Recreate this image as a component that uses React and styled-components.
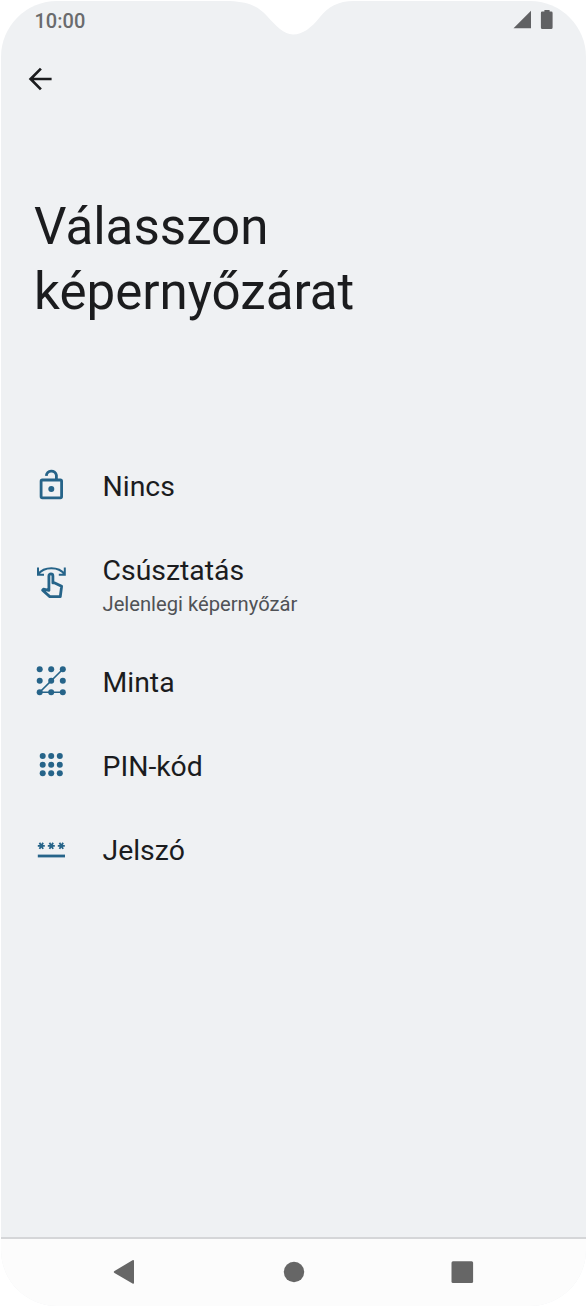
import styled, { createGlobalStyle } from "styled-components";

const options = [
  { id: "none", title: "Nincs", Icon: LockIcon },
  { id: "swipe", title: "Csúsztatás", note: "Jelenlegi képernyőzár", Icon: SwipeIcon },
  { id: "pattern", title: "Minta", Icon: PatternIcon },
  { id: "pin", title: "PIN-kód", Icon: PinIcon },
  { id: "password", title: "Jelszó", Icon: PasswordIcon },
];

const App = () => {
  return (
    <>
      <GlobalStyle />
      <Phone>
        <StatusBar>
          <Time>10:00</Time>
          <Notch viewBox="0 0 110 36">
            <path d="M0 0V1C17 2 27 5 37 16C46 26 54 34.5 63 34.5C73 34.5 81 28 90 17C98 7 108 1 124 1V0Z" />
          </Notch>
          <StatusIcons viewBox="0 0 42 22">
            <path d="M0.5 18.3L18 0.8V18.3Z" />
            <path d="M31.4 0H36.6V1.6H38.3Q39.6 1.6 39.6 2.9V17.4Q39.6 18.9 38.1 18.9H29.3Q27.9 18.9 27.9 17.4V2.9Q27.9 1.6 29.2 1.6H31.4Z" />
          </StatusIcons>
        </StatusBar>
        <Toolbar>
          <BackButton aria-label="Vissza">
            <svg width="24" height="24" viewBox="0 0 24 24">
              <path d="M23.6 12H2.8M12.9 1.6L2.6 12L12.9 22.4" />
            </svg>
          </BackButton>
        </Toolbar>
        <Title>Válasszon képernyőzárat</Title>
        <List>
          {options.map(({ id, title, note, Icon }) => (
            <Row key={id} $tall={Boolean(note)}>
              <Icon />
              <Label>
                <Name>{title}</Name>
                {note && <Note>{note}</Note>}
              </Label>
            </Row>
          ))}
        </List>
        <NavBar>
          <NavButton>
            <svg width="24" height="26" viewBox="0 0 24 26">
              <path d="M2.5 12.1L20.5 1.3Q22 .6 22 2.2V23.8Q22 25.4 20.5 24.6L2.5 13.9Q1 13 2.5 12.1Z" />
            </svg>
          </NavButton>
          <NavButton>
            <svg width="24" height="26" viewBox="0 0 24 26">
              <circle cx="13" cy="13" r="10.2" />
            </svg>
          </NavButton>
          <NavButton>
            <svg width="24" height="26" viewBox="0 0 24 26">
              <rect x="1.5" y="2.3" width="21.6" height="21.6" rx="1.5" />
            </svg>
          </NavButton>
        </NavBar>
      </Phone>
    </>
  );
};

function LockIcon() {
  return (
    <RowIcon viewBox="0 0 34 34">
      <rect x="7.1" y="12" width="20.5" height="17.8" rx="1.2" />
      <path d="M12.3 7.8A5.1 5.1 0 0 1 22.4 7.2V12" />
      <circle className="dot" cx="17.3" cy="21" r="3" />
    </RowIcon>
  );
}

function SwipeIcon() {
  return (
    <RowIcon viewBox="0 0 34 34" $stroke={2}>
      <path d="M4 1.4V8.8H10M30.8 1.4V8.8H24.8M4.2 8.2C10 .2 24.8 .2 30.6 8.2" />
      <path
        strokeWidth="2.8"
        strokeLinejoin="round"
        d="M14.9 24.4V9.9A2 2 0 0 1 18.9 9.9V16.9H20.8L27.6 20.3L26.3 30.6H15.8L8.6 24.2L9.5 23.2Z"
      />
    </RowIcon>
  );
}

function PatternIcon() {
  return (
    <RowIcon viewBox="0 0 34 34" $stroke={1.6}>
      <path d="M28.8 5.3L5.7 28.3H28.8" />
      <Dots xs={[5.7, 17.2, 28.8]} ys={[5.3, 16.8, 28.2]} />
    </RowIcon>
  );
}

function PinIcon() {
  return (
    <RowIcon viewBox="0 0 34 34">
      <Dots xs={[8.7, 17.2, 25.8]} ys={[8.1, 16.7, 25.3]} />
    </RowIcon>
  );
}

function PasswordIcon() {
  return (
    <RowIcon viewBox="0 0 34 34" $stroke={1.8}>
      {[7.3, 17.3, 27.3].map((x) => (
        <path
          key={x}
          d="M-3.5 0H3.5M-1.8 -3.1L1.8 3.1M1.8 -3.1L-1.8 3.1"
          transform={`translate(${x} 13.8)`}
        />
      ))}
      <path strokeWidth="2.8" d="M3.8 24H31" />
    </RowIcon>
  );
}

const Dots = ({ xs, ys }) =>
  ys.map((y) =>
    xs.map((x) => <circle className="dot" key={`${x}-${y}`} cx={x} cy={y} r="3" />)
  );

const GlobalStyle = createGlobalStyle`
  * {
    box-sizing: border-box;
  }
  body {
    margin: 0;
    background: #fff;
    font-family: Roboto, sans-serif;
  }
`;

const Phone = styled.main`
  display: flex;
  flex-direction: column;
  width: 585px;
  height: 1305px;
  margin: 1px 1px 0;
  border-radius: 56px;
  overflow: hidden;
  background: #eff1f3;
  color: #1b1c1e;
`;

const StatusBar = styled.header`
  position: relative;
  display: flex;
  justify-content: space-between;
  height: 40px;
  padding: 9px 31px 0 33.5px;
`;

const Time = styled.span`
  font-size: 20px;
  line-height: 22px;
  font-weight: 500;
  color: #6a6b6d;
`;

/* camera cutout, hangs over the bar */
const Notch = styled.svg`
  position: absolute;
  top: -1px;
  left: 229px;
  width: 110px;
  height: 36px;
  overflow: visible;
  fill: #fff;
`;

const StatusIcons = styled.svg`
  width: 42px;
  height: 22px;
  fill: #606163;
`;

const Toolbar = styled.div`
  display: flex;
  align-items: center;
  height: 76px;
  padding: 0 27px;
`;

const BackButton = styled.button`
  display: flex;
  padding: 0;
  border: 0;
  background: none;

  svg {
    fill: none;
    stroke: #1b1c1e;
    stroke-width: 2.7;
  }
`;

const Title = styled.h1`
  width: 400px;
  height: 326px;
  margin: 0;
  padding: 77px 0 0 33px;
  font-size: 51.1px;
  line-height: 65px;
  font-weight: 400;
`;

const List = styled.div`
  flex: 1;
`;

const Row = styled.div`
  display: flex;
  align-items: center;
  gap: 34.5px;
  height: ${(props) => (props.$tall ? 112 : 84)}px;
  padding-left: 33px;
`;

const RowIcon = styled.svg`
  flex: none;
  width: 34px;
  height: 34px;
  fill: none;
  stroke: #266489;
  stroke-width: ${(props) => props.$stroke || 2.8};

  .dot {
    fill: #266489;
    stroke: none;
  }
`;

const Label = styled.div`
  display: flex;
  flex-direction: column;
  padding-top: 3px;
`;

const Name = styled.span`
  font-size: 28.4px;
  line-height: 38px;
`;

const Note = styled.span`
  font-size: 20.2px;
  line-height: 28px;
  color: #505256;
`;

const NavBar = styled.nav`
  display: flex;
  justify-content: center;
  align-items: center;
  gap: 145px;
  height: 69px;
  padding: 0 2px 2px 0;
  border-top: 2px solid #d5d6d8;
  background: #fcfcfc;
`;

const NavButton = styled.div`
  display: flex;
  fill: #666;
`;

export default App;
